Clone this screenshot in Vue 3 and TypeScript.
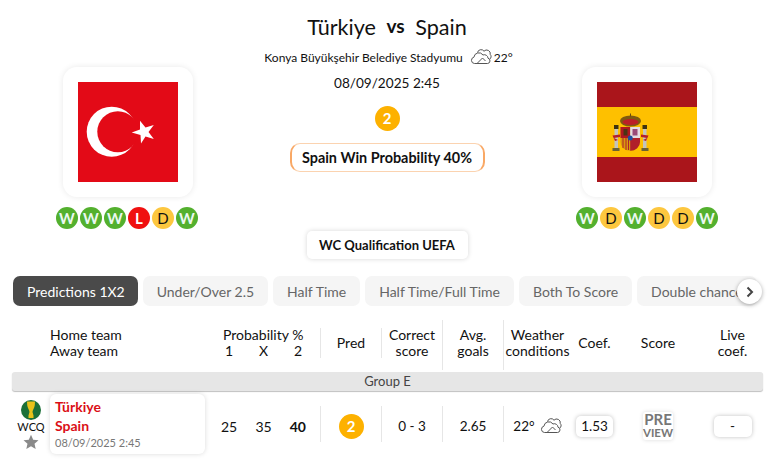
<script setup lang="ts">
interface IForm {
  r: string
}
const homeForm: IForm[] = ['W', 'W', 'W', 'L', 'D', 'W'].map((r) => ({ r }));
const awayForm: IForm[] = ['W', 'D', 'W', 'D', 'D', 'W'].map((r) => ({ r }));
const tabs = ['Predictions 1X2', 'Under/Over 2.5', 'Half Time', 'Half Time/Full Time', 'Both To Score', 'Double chance'];
</script>

<template>
  <div class="page">
    <section class="hero">
      <div class="team">
        <div class="flag-card">
          <svg class="flag" viewBox="0 0 100 100">
            <rect width="100" height="100" fill="#e30a17" />
            <circle cx="33.700" cy="49.700" r="25" fill="#fff" />
            <circle cx="39.800" cy="49.700" r="20.500" fill="#e30a17" />
            <polygon fill="#fff" points="53.700,50.500 62,47.500 62,38.700 67.500,45.500 75.800,43 70.500,50 75.800,57 67.500,54.500 63,61.500 62.500,53" />
          </svg>
        </div>
        <div class="form">
          <span v-for="(f, i) in homeForm" :key="i" :class="'dot ' + f.r">{{ f.r }}</span>
        </div>
      </div>

      <div class="center">
        <h1 class="title">Türkiye <small>vs</small> Spain</h1>
        <div class="venue">
          Konya Büyükşehir Belediye Stadyumu
          <svg class="cloud" viewBox="0 0 22 16">
            <path d="M7 14.5H4.5a3.2 3.2 0 0 1-.6-6.3A5 5 0 0 1 13 6a3.6 3.6 0 0 1 5 3.2 2.7 2.7 0 0 1-.5 5.3Z" />
            <path d="M7 14.500 12.500 9l3 3M7.500 3.600A3.600 3.600 0 0 1 14 2.200a3.600 3.600 0 0 1 6.200 3.200c1.400 1.400 1.200 3.600-.6 4.800" />
          </svg>
          <span>22°</span>
        </div>
        <div class="kickoff">08/09/2025 2:45</div>
        <div class="pick big">2</div>
        <div class="win">Spain Win Probability 40%</div>
        <div class="league">WC Qualification UEFA</div>
      </div>

      <div class="team right">
        <div class="flag-card">
          <svg class="flag" viewBox="0 0 100 100">
            <rect width="100" height="100" fill="#aa151b" />
            <rect y="25" width="100" height="50" fill="#fec000" />
            <rect x="17.500" y="44" width="3.500" height="23" fill="#c4c4bc" />
            <rect x="46" y="44" width="3.500" height="23" fill="#c4c4bc" />
            <rect x="17" y="43" width="4.500" height="4" fill="#3e3210" />
            <rect x="45.500" y="43" width="4.500" height="4" fill="#3e3210" />
            <rect x="15.500" y="66" width="7" height="3" fill="#6b6234" />
            <rect x="44.500" y="66" width="7" height="3" fill="#6b6234" />
            <path d="M15.500 53.500 23 52.500V55l-6 1 4 2-3 1ZM51.500 53.500 44 52.500V55l6 1-4 2 3 1Z" fill="#b4202a" />
            <ellipse cx="33.500" cy="39" rx="10.500" ry="5.500" fill="#7f5a10" />
            <ellipse cx="33.500" cy="40" rx="8" ry="3" fill="#bb1f26" />
            <rect x="33" y="31.500" width="1" height="3" fill="#6b4a10" />
            <path d="M23.500 45H43V60a9.700 8.700 0 0 1-19.500 0Z" fill="#d99a10" />
            <rect x="23.500" y="45" width="9.700" height="11" fill="#b01820" />
            <rect x="33.200" y="45" width="9.800" height="11" fill="#e4dde2" />
            <rect x="26.500" y="47" width="4" height="6.500" fill="#4a3414" />
            <rect x="35.500" y="47" width="5" height="6.500" fill="#9a4a78" />
            <path d="M33.200 56H43V60a9.700 8.700 0 0 1-9.800 8.700Z" fill="#b0202a" />
            <path d="M26 56v10M29 56v12M31.500 56v12" stroke="#b0202a" stroke-width="1" />
            <circle cx="33.200" cy="56" r="2.500" fill="#1f4fa0" />
          </svg>
        </div>
        <div class="form">
          <span v-for="(f, i) in awayForm" :key="i" :class="'dot ' + f.r">{{ f.r }}</span>
        </div>
      </div>
    </section>

    <nav class="tabs-wrap">
      <div class="tabs">
        <button v-for="(t, i) in tabs" :key="t" :class="'tab ' + (i === 0 ? 'active' : '')">{{ t }}</button>
      </div>
      <span class="next">
        <svg viewBox="0 0 10 12" width="10" height="12"><path d="M2.500 1.500 7 6l-4.500 4.500" /></svg>
      </span>
    </nav>

    <div class="grid head">
      <div></div>
      <div class="names">Home team<br />Away team</div>
      <div class="prob-head">
        <div class="prob-title">Probability %</div>
        <div class="probs"><span>1</span><span>X</span><span>2</span></div>
      </div>
      <div class="cell sep short">Pred</div>
      <div class="cell sep short">Correct<br />score</div>
      <div class="cell sep tall">Avg.<br />goals</div>
      <div class="cell sep tall">Weather<br />conditions</div>
      <div class="cell">Coef.</div>
      <div class="cell">Score</div>
      <div class="cell">Live<br />coef.</div>
    </div>

    <div class="group">Group E</div>

    <div class="grid row">
      <div class="comp">
        <svg class="cup" viewBox="0 0 20 20">
          <circle cx="10" cy="10" r="10" fill="#1b7038" />
          <path d="M6 1.500h8l-.2 3.500c-.3 3-2 4.500-2.300 7l1 3.500V18H7.500v-2.500l1-3.500c-.3-2.500-2-4-2.300-7Z" fill="#e8c21a" />
        </svg>
        <span class="wcq">WCQ</span>
        <svg class="star" viewBox="0 0 16 16">
          <path d="M8 .8l2.200 4.900 5.300.6-4 3.500 1.200 5.300L8 12.300l-4.700 2.800 1.200-5.300-4-3.500 5.300-.6Z" fill="#8a8a8a" />
        </svg>
      </div>
      <div class="match-card">
        <div class="club">Türkiye</div>
        <div class="club">Spain</div>
        <div class="date">08/09/2025 2:45</div>
      </div>
      <div class="probs values"><span>25</span><span>35</span><b>40</b></div>
      <div class="cell sep"><span class="pick">2</span></div>
      <div class="cell sep">0 - 3</div>
      <div class="cell sep">2.65</div>
      <div class="cell sep weather">
        <span>22°</span>
        <svg class="cloud gray" viewBox="0 0 22 16">
          <path d="M7 14.5H4.5a3.2 3.2 0 0 1-.6-6.3A5 5 0 0 1 13 6a3.6 3.6 0 0 1 5 3.2 2.7 2.7 0 0 1-.5 5.3Z" />
          <path d="M7 14.500 12.500 9l3 3M7.500 3.600A3.600 3.600 0 0 1 14 2.200a3.600 3.600 0 0 1 6.200 3.200c1.400 1.400 1.200 3.600-.6 4.800" />
        </svg>
      </div>
      <div class="cell"><span class="box coef">1.53</span></div>
      <div class="cell"><span class="preview"><i>PRE</i><em>VIEW</em></span></div>
      <div class="cell"><span class="box live">-</span></div>
    </div>
  </div>
</template>

<style scoped>
.page {
  width: 773px;
  height: 469px;
  overflow: hidden;
  font-family: Lato, "Open Sans", sans-serif;
  font-size: 14px;
  color: #111;
  background: #fff;
}

.hero {
  display: grid;
  grid-template-columns: 256px 262px 255px;
  height: 276px;
}

.team {
  display: flex;
  flex-direction: column;
  align-items: center;
  padding-top: 67px;
}

.team.right {
  padding-left: 3px;
}

.flag-card {
  width: 130px;
  height: 130px;
  padding: 15px;
  box-sizing: border-box;
  border-radius: 14px;
  background: #fff;
  box-shadow: 0 0 6px rgba(0, 0, 0, 0.09);
}

.flag {
  display: block;
  width: 100px;
  height: 100px;
}

.form {
  display: flex;
  gap: 2px;
  margin: 10px 0 0 -2px;
}

.team.right .form {
  margin-left: 0;
}

.dot {
  width: 22px;
  height: 22px;
  border-radius: 50%;
  font-size: 15px;
  font-weight: 700;
  line-height: 22px;
  text-align: center;
  color: #eaf8f2;
}

.dot.W {
  background: #53b02e;
}

.dot.L {
  background: #f01010;
  color: #fff;
}

.dot.D {
  background: #fdc73f;
  color: #111;
  font-weight: 400;
}

.center {
  display: flex;
  flex-direction: column;
  align-items: center;
}

.title {
  margin: 13px 0 0;
  font-size: 21.6px;
  font-weight: 400;
  line-height: 26px;
  white-space: nowrap;
}

.title small {
  margin: 0 5px;
  font-size: 19px;
  font-weight: 700;
  vertical-align: 2px;
}

.venue {
  display: flex;
  align-items: center;
  margin-top: 7px;
  padding-left: 3px;
  height: 20px;
  font-size: 12px;
  white-space: nowrap;
}

.cloud {
  width: 22px;
  height: 16px;
  margin: 0 2px 0 7px;
  fill: none;
  stroke: #555;
  stroke-width: 1;
}

.cloud.gray {
  margin: 0 0 0 5px;
}

.kickoff {
  margin-top: 8px;
  font-size: 13.6px;
  line-height: 17px;
}

.pick {
  display: inline-block;
  width: 25px;
  height: 25px;
  border-radius: 50%;
  background: #fdb100;
  color: #fff;
  font-size: 15px;
  font-weight: 700;
  line-height: 25px;
  text-align: center;
}

.pick.big {
  margin-top: 14px;
}

.win {
  margin-top: 12px;
  width: 195px;
  height: 29px;
  box-sizing: border-box;
  border: 1px solid #fbd3b0;
  border-left: 2px solid #f9a865;
  border-right: 2px solid #f9a865;
  border-radius: 10px;
  font-size: 14.4px;
  font-weight: 700;
  line-height: 27px;
  text-align: center;
  white-space: nowrap;
}

.league {
  margin-top: 59px;
  width: 161px;
  height: 28px;
  border-radius: 5px;
  background: #fff;
  box-shadow: 0 0 5px rgba(0, 0, 0, 0.16);
  font-size: 13px;
  font-weight: 700;
  line-height: 28px;
  text-align: center;
  white-space: nowrap;
}

.tabs-wrap {
  position: relative;
  margin-left: 13px;
  width: 750px;
  height: 30px;
}

.tabs {
  display: flex;
  gap: 5px;
  overflow: hidden;
  height: 30px;
}

.tab {
  flex: none;
  height: 30px;
  padding: 0 14px;
  border: 0;
  border-radius: 7px;
  background: #f5f5f5;
  color: #666;
  font-family: inherit;
  font-size: 14px;
}

.tab.active {
  padding-right: 13px;
  background: #4a4a4a;
  color: #fff;
}

.next {
  position: absolute;
  right: 1px;
  top: 3px;
  width: 25px;
  height: 25px;
  display: flex;
  align-items: center;
  justify-content: center;
  border-radius: 50%;
  background: #fff;
  box-shadow: 0 1px 4px rgba(0, 0, 0, 0.35);
}

.next path {
  fill: none;
  stroke: #444;
  stroke-width: 2;
}

.grid {
  display: grid;
  grid-template-columns: 50px 172px 98px 61px 61px 61px 68px 47px 80px 69px;
  align-items: center;
}

.head {
  margin-top: 14px;
  height: 46px;
  line-height: 16px;
}

.names {
  white-space: nowrap;
}

.prob-head {
  white-space: nowrap;
}

.prob-title {
  padding-left: 1px;
}

.probs {
  display: flex;
  width: 83px;
  justify-content: space-between;
}

.head .probs {
  padding-left: 3px;
  width: 77px;
}

.cell {
  display: flex;
  height: 100%;
  align-items: center;
  justify-content: center;
  text-align: center;
  white-space: nowrap;
}

.sep {
  padding-left: 1px;
  box-sizing: border-box;
  box-shadow: inset 1px 0 0 #e6e6e6;
}

.head .short {
  height: 30px;
}

.head .tall {
  height: 50px;
  margin-bottom: -4px;
  padding-bottom: 4px;
  align-self: start;
}

.group {
  margin: 6px 10px 0 12px;
  height: 19px;
  border-radius: 3px;
  background: #e6e6e6;
  box-shadow: 0 1px 1px rgba(0, 0, 0, 0.25);
  color: #444;
  font-size: 13px;
  line-height: 19px;
  text-align: center;
}

.row {
  margin-top: 3px;
  height: 60px;
  font-size: 13.5px;
}

.row .sep {
  height: 36px;
  padding-top: 4px;
}

.comp {
  display: flex;
  flex-direction: column;
  align-items: center;
  padding-left: 12px;
  padding-top: 2px;
}

.cup {
  width: 20px;
  height: 20px;
}

.wcq {
  font-size: 11px;
  line-height: 14px;
}

.star {
  width: 16px;
  height: 16px;
}

.match-card {
  width: 155px;
  height: 60px;
  padding: 3px 5px;
  box-sizing: border-box;
  border-radius: 6px;
  background: #fff;
  box-shadow: 0 0 5px rgba(0, 0, 0, 0.15);
}

.club {
  color: #db0f17;
  font-size: 14px;
  font-weight: 700;
  line-height: 19px;
}

.date {
  color: #777;
  font-size: 11px;
  line-height: 16px;
}

.values {
  margin-left: -1px;
  padding: 4px 7px 0 0;
  width: 85px;
  font-size: 14px;
}

.box {
  display: block;
  height: 21px;
  margin-top: 4px;
  border-radius: 5px;
  background: #fff;
  box-shadow: 0 0 4px rgba(0, 0, 0, 0.25);
  line-height: 21px;
  text-align: center;
}

.coef {
  width: 37px;
}

.live {
  width: 38px;
}

.preview {
  display: flex;
  flex-direction: column;
  width: 30px;
  height: 28px;
  margin-top: 3px;
  align-items: center;
  justify-content: center;
  border-radius: 3px;
  background: #fff;
  box-shadow: 0 0 4px rgba(0, 0, 0, 0.15);
  color: #777;
  font-weight: 700;
}

.preview i {
  font-style: normal;
  font-size: 15px;
  line-height: 15px;
}

.preview em {
  font-style: normal;
  font-size: 11.5px;
  line-height: 12px;
}
</style>
